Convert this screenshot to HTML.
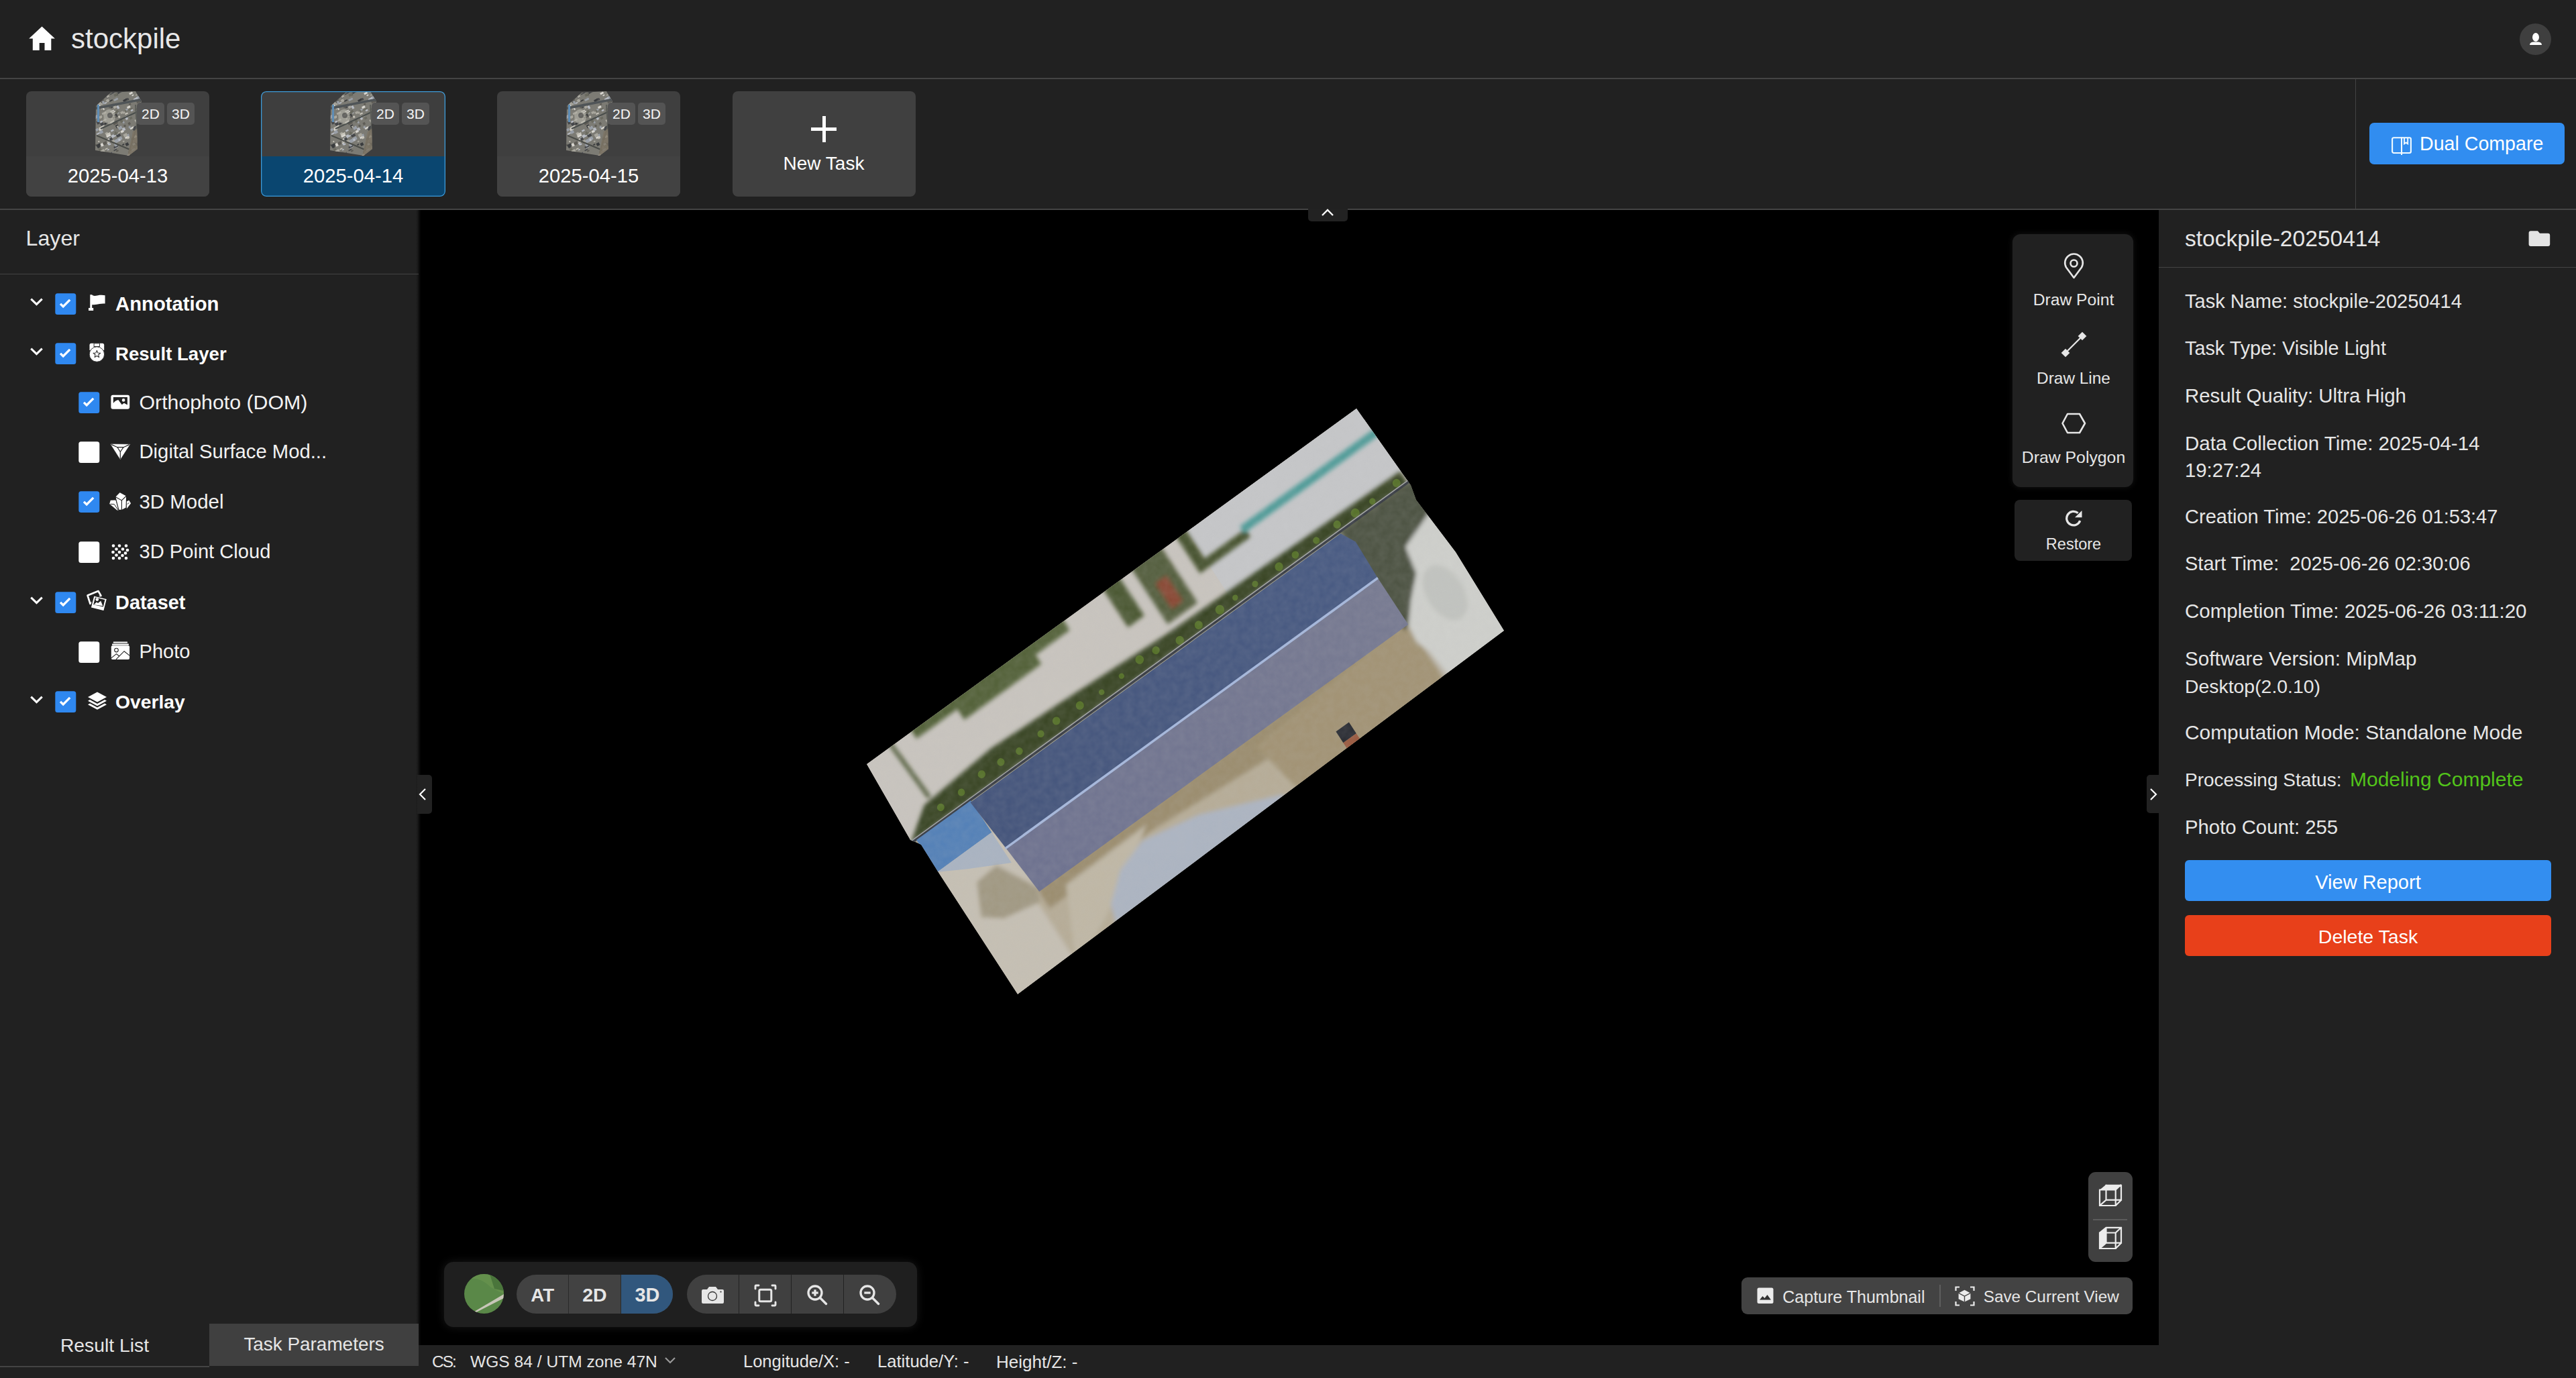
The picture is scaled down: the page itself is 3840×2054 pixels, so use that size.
<!DOCTYPE html>
<html><head><meta charset="utf-8"><style>
html,body{margin:0;padding:0;width:3840px;height:2054px;overflow:hidden;background:#000;}
body{position:relative;font-family:"Liberation Sans",sans-serif;}
.t{position:absolute;line-height:1;white-space:nowrap;}
.r{position:absolute;}
svg.r{overflow:visible}
</style></head><body>
<div class="r" style="left:0px;top:0px;width:3840px;height:116px;background:#212121;"></div>
<div class="r" style="left:0px;top:116px;width:3840px;height:1.5px;background:#444444;"></div>
<div class="r" style="left:0px;top:118px;width:3840px;height:193px;background:#212121;"></div>
<div class="r" style="left:3510.5px;top:117px;width:1.300000000000182px;height:194px;background:#444444;"></div>
<div class="r" style="left:0px;top:311px;width:3840px;height:1.5px;background:#444444;"></div>
<div class="r" style="left:0px;top:313px;width:624px;height:1741px;background:#212121;"></div>
<div class="r" style="left:3218px;top:313px;width:622px;height:1741px;background:#212121;"></div>
<div class="r" style="left:624px;top:313px;width:2594px;height:1692px;background:#000;"></div>
<div class="r" style="left:620px;top:313px;width:8px;height:1692px;background:linear-gradient(90deg,#212121 0%,#1a1a1a 30%,#060606 75%,#000 100%);"></div>
<div class="r" style="left:624px;top:2005px;width:2594px;height:49px;background:#212121;"></div>
<svg class="r" style="left:40px;top:36px;" width="46" height="42" viewBox="0 0 46 42"><path d="M22.5 3.6 L3.2 21.5 H8.8 V39.1 H18.7 V27.9 H26.5 V39.1 H36.3 V21.5 H41.9 Z" fill="#fff"/></svg>
<div class="t" style="left:106.0px;top:37.4px;font-size:42px;color:#e8e8e8;font-weight:400;">stockpile</div>
<div class="r" style="left:3756px;top:35px;width:47px;height:47px;border-radius:50%;background:#3f3f3f"></div>
<svg class="r" style="left:3768px;top:46px;" width="24" height="24" viewBox="0 0 24 24"><ellipse cx="12" cy="9.5" rx="5" ry="6.5" fill="#fff"/><path d="M3 21 Q3 17 8 16.5 L16 16.5 Q21 17 21 21 Z" fill="#fff"/></svg>
<svg width="0" height="0" style="position:absolute"><defs><symbol id="thumb" viewBox="0 0 72 97"><defs><clipPath id="thc"><polygon points="3,22 25,2 62,0 71,15 64,50 65,86 52,96 2,88"/></clipPath></defs><g clip-path="url(#thc)"><rect width="72" height="97" fill="#7c7b74"/><rect x="22.7" y="14.5" width="5.3" height="1.8" fill="#3a3c3e" transform="rotate(-28 22.7 14.5)"/><rect x="6.6" y="55.9" width="6.5" height="2.3" fill="#a9a79e" transform="rotate(-28 6.6 55.9)"/><rect x="30.4" y="6.7" width="2.5" height="3.0" fill="#a9a79e" transform="rotate(-28 30.4 6.7)"/><rect x="66.3" y="60.5" width="4.9" height="1.7" fill="#6a6a60" transform="rotate(-28 66.3 60.5)"/><rect x="3.5" y="21.2" width="4.8" height="2.0" fill="#6a6a60" transform="rotate(-28 3.5 21.2)"/><rect x="10.1" y="11.3" width="3.5" height="4.4" fill="#5e5c56" transform="rotate(-28 10.1 11.3)"/><rect x="7.2" y="54.8" width="2.9" height="1.8" fill="#a9a79e" transform="rotate(-28 7.2 54.8)"/><rect x="39.5" y="59.4" width="4.5" height="3.4" fill="#d8d6d0" transform="rotate(-28 39.5 59.4)"/><rect x="32.6" y="88.7" width="3.8" height="2.4" fill="#5e5c56" transform="rotate(-28 32.6 88.7)"/><rect x="48.9" y="23.4" width="4.9" height="3.3" fill="#d8d6d0" transform="rotate(-28 48.9 23.4)"/><rect x="51.1" y="27.6" width="6.9" height="1.9" fill="#6a6a60" transform="rotate(-28 51.1 27.6)"/><rect x="11.5" y="32.8" width="6.7" height="3.0" fill="#a9a79e" transform="rotate(-28 11.5 32.8)"/><rect x="53.5" y="55.0" width="6.4" height="2.6" fill="#d8d6d0" transform="rotate(-28 53.5 55.0)"/><rect x="41.6" y="55.7" width="4.3" height="4.4" fill="#b8bcc4" transform="rotate(-28 41.6 55.7)"/><rect x="33.2" y="63.8" width="2.3" height="4.0" fill="#9aa0a8" transform="rotate(-28 33.2 63.8)"/><rect x="19.9" y="37.0" width="5.3" height="1.6" fill="#9aa0a8" transform="rotate(-28 19.9 37.0)"/><rect x="24.9" y="58.6" width="4.5" height="2.3" fill="#b8bcc4" transform="rotate(-28 24.9 58.6)"/><rect x="9.1" y="23.8" width="4.0" height="4.5" fill="#a9a79e" transform="rotate(-28 9.1 23.8)"/><rect x="11.6" y="38.6" width="3.4" height="2.0" fill="#6a6a60" transform="rotate(-28 11.6 38.6)"/><rect x="60.5" y="26.7" width="4.1" height="2.8" fill="#6a6a60" transform="rotate(-28 60.5 26.7)"/><rect x="67.0" y="14.5" width="2.9" height="2.3" fill="#45474a" transform="rotate(-28 67.0 14.5)"/><rect x="0.8" y="79.8" width="2.9" height="2.5" fill="#5e5c56" transform="rotate(-28 0.8 79.8)"/><rect x="29.3" y="35.4" width="4.8" height="4.8" fill="#3a3c3e" transform="rotate(-28 29.3 35.4)"/><rect x="66.5" y="62.9" width="5.7" height="3.1" fill="#3a3c3e" transform="rotate(-28 66.5 62.9)"/><rect x="27.5" y="38.3" width="2.5" height="3.7" fill="#c9c6bc" transform="rotate(-28 27.5 38.3)"/><rect x="13.3" y="94.5" width="4.2" height="1.9" fill="#c9c6bc" transform="rotate(-28 13.3 94.5)"/><rect x="7.2" y="54.4" width="4.7" height="4.8" fill="#c9c6bc" transform="rotate(-28 7.2 54.4)"/><rect x="4.9" y="20.0" width="3.9" height="3.7" fill="#d8d6d0" transform="rotate(-28 4.9 20.0)"/><rect x="42.2" y="45.5" width="2.6" height="3.2" fill="#9aa0a8" transform="rotate(-28 42.2 45.5)"/><rect x="33.6" y="29.9" width="2.7" height="4.1" fill="#b8bcc4" transform="rotate(-28 33.6 29.9)"/><rect x="33.5" y="66.4" width="4.6" height="2.2" fill="#3a3c3e" transform="rotate(-28 33.5 66.4)"/><rect x="25.3" y="66.2" width="6.6" height="4.2" fill="#b8bcc4" transform="rotate(-28 25.3 66.2)"/><rect x="68.5" y="82.9" width="5.5" height="2.4" fill="#d8d6d0" transform="rotate(-28 68.5 82.9)"/><rect x="63.6" y="34.1" width="3.1" height="3.4" fill="#3a3c3e" transform="rotate(-28 63.6 34.1)"/><rect x="23.1" y="21.4" width="6.1" height="4.9" fill="#45474a" transform="rotate(-28 23.1 21.4)"/><rect x="56.4" y="78.6" width="5.7" height="2.3" fill="#3a3c3e" transform="rotate(-28 56.4 78.6)"/><rect x="34.5" y="70.2" width="6.9" height="4.3" fill="#9aa0a8" transform="rotate(-28 34.5 70.2)"/><rect x="18.1" y="66.5" width="6.8" height="3.1" fill="#d8d6d0" transform="rotate(-28 18.1 66.5)"/><rect x="66.9" y="35.0" width="3.1" height="2.3" fill="#45474a" transform="rotate(-28 66.9 35.0)"/><rect x="23.6" y="46.3" width="6.9" height="3.6" fill="#c9c6bc" transform="rotate(-28 23.6 46.3)"/><rect x="33.6" y="62.7" width="6.0" height="1.8" fill="#a9a79e" transform="rotate(-28 33.6 62.7)"/><rect x="63.7" y="75.1" width="5.8" height="3.2" fill="#5e5c56" transform="rotate(-28 63.7 75.1)"/><rect x="30.4" y="61.0" width="2.4" height="4.8" fill="#6a6a60" transform="rotate(-28 30.4 61.0)"/><rect x="32.4" y="71.4" width="2.4" height="2.1" fill="#5e5c56" transform="rotate(-28 32.4 71.4)"/><rect x="1.9" y="56.7" width="4.3" height="3.8" fill="#9aa0a8" transform="rotate(-28 1.9 56.7)"/><rect x="46.0" y="33.6" width="4.7" height="2.0" fill="#c9c6bc" transform="rotate(-28 46.0 33.6)"/><rect x="56.0" y="69.7" width="2.5" height="4.1" fill="#5e5c56" transform="rotate(-28 56.0 69.7)"/><rect x="30.4" y="83.7" width="6.1" height="2.2" fill="#b8bcc4" transform="rotate(-28 30.4 83.7)"/><rect x="14.9" y="48.1" width="5.8" height="2.6" fill="#3a3c3e" transform="rotate(-28 14.9 48.1)"/><rect x="29.3" y="12.6" width="6.6" height="2.7" fill="#9aa0a8" transform="rotate(-28 29.3 12.6)"/><rect x="46.4" y="78.2" width="4.6" height="4.4" fill="#3a3c3e" transform="rotate(-28 46.4 78.2)"/><rect x="9.2" y="14.6" width="4.6" height="4.6" fill="#5e5c56" transform="rotate(-28 9.2 14.6)"/><rect x="42.6" y="74.5" width="2.7" height="2.0" fill="#a9a79e" transform="rotate(-28 42.6 74.5)"/><rect x="39.0" y="31.3" width="4.6" height="3.4" fill="#a9a79e" transform="rotate(-28 39.0 31.3)"/><rect x="61.8" y="5.5" width="3.0" height="1.6" fill="#a9a79e" transform="rotate(-28 61.8 5.5)"/><rect x="35.5" y="53.9" width="5.8" height="4.7" fill="#9aa0a8" transform="rotate(-28 35.5 53.9)"/><rect x="22.8" y="93.4" width="5.0" height="2.2" fill="#b8bcc4" transform="rotate(-28 22.8 93.4)"/><rect x="31.7" y="51.2" width="4.4" height="4.8" fill="#3a3c3e" transform="rotate(-28 31.7 51.2)"/><rect x="61.4" y="90.4" width="3.3" height="3.5" fill="#45474a" transform="rotate(-28 61.4 90.4)"/><rect x="58.8" y="13.2" width="2.6" height="3.0" fill="#a9a79e" transform="rotate(-28 58.8 13.2)"/><rect x="47.0" y="41.1" width="3.1" height="2.6" fill="#a9a79e" transform="rotate(-28 47.0 41.1)"/><rect x="62.8" y="14.8" width="5.6" height="3.8" fill="#5e5c56" transform="rotate(-28 62.8 14.8)"/><rect x="17.7" y="13.2" width="4.3" height="4.1" fill="#a9a79e" transform="rotate(-28 17.7 13.2)"/><rect x="27.9" y="46.8" width="6.9" height="4.4" fill="#5e5c56" transform="rotate(-28 27.9 46.8)"/><rect x="49.4" y="95.4" width="4.0" height="3.0" fill="#d8d6d0" transform="rotate(-28 49.4 95.4)"/><rect x="22.3" y="69.3" width="2.1" height="3.4" fill="#9aa0a8" transform="rotate(-28 22.3 69.3)"/><rect x="49.2" y="36.9" width="4.6" height="2.5" fill="#a9a79e" transform="rotate(-28 49.2 36.9)"/><rect x="7.9" y="88.2" width="3.1" height="4.6" fill="#a9a79e" transform="rotate(-28 7.9 88.2)"/><rect x="18.6" y="3.8" width="5.9" height="2.4" fill="#5e5c56" transform="rotate(-28 18.6 3.8)"/><rect x="57.4" y="81.6" width="5.4" height="4.8" fill="#6a6a60" transform="rotate(-28 57.4 81.6)"/><rect x="10.5" y="88.2" width="4.9" height="4.0" fill="#a9a79e" transform="rotate(-28 10.5 88.2)"/><rect x="19.5" y="76.8" width="2.9" height="4.6" fill="#b8bcc4" transform="rotate(-28 19.5 76.8)"/><rect x="65.7" y="60.9" width="6.0" height="1.8" fill="#45474a" transform="rotate(-28 65.7 60.9)"/><rect x="4.7" y="82.8" width="4.3" height="2.7" fill="#3a3c3e" transform="rotate(-28 4.7 82.8)"/><rect x="29.2" y="87.9" width="5.1" height="1.7" fill="#45474a" transform="rotate(-28 29.2 87.9)"/><rect x="65.7" y="93.0" width="3.3" height="2.1" fill="#b8bcc4" transform="rotate(-28 65.7 93.0)"/><rect x="44.0" y="51.0" width="3.0" height="3.1" fill="#5e5c56" transform="rotate(-28 44.0 51.0)"/><rect x="18.9" y="77.2" width="7.0" height="1.6" fill="#c9c6bc" transform="rotate(-28 18.9 77.2)"/><rect x="51.3" y="52.9" width="2.9" height="3.2" fill="#9aa0a8" transform="rotate(-28 51.3 52.9)"/><rect x="7.4" y="78.6" width="4.2" height="3.2" fill="#6a6a60" transform="rotate(-28 7.4 78.6)"/><rect x="67.9" y="29.5" width="3.1" height="2.3" fill="#45474a" transform="rotate(-28 67.9 29.5)"/><rect x="58.3" y="67.8" width="5.2" height="2.9" fill="#d8d6d0" transform="rotate(-28 58.3 67.8)"/><rect x="68.7" y="80.4" width="2.1" height="3.7" fill="#b8bcc4" transform="rotate(-28 68.7 80.4)"/><rect x="30.2" y="5.3" width="5.3" height="2.8" fill="#3a3c3e" transform="rotate(-28 30.2 5.3)"/><rect x="46.9" y="27.1" width="3.2" height="2.5" fill="#9aa0a8" transform="rotate(-28 46.9 27.1)"/><rect x="13.0" y="25.8" width="2.0" height="2.8" fill="#d8d6d0" transform="rotate(-28 13.0 25.8)"/><rect x="68.1" y="52.5" width="3.2" height="4.9" fill="#b8bcc4" transform="rotate(-28 68.1 52.5)"/><rect x="15.3" y="17.6" width="3.7" height="1.8" fill="#b8bcc4" transform="rotate(-28 15.3 17.6)"/><rect x="35.2" y="19.3" width="4.5" height="1.5" fill="#b8bcc4" transform="rotate(-28 35.2 19.3)"/><rect x="57.2" y="13.8" width="4.9" height="2.9" fill="#b8bcc4" transform="rotate(-28 57.2 13.8)"/><rect x="21.3" y="22.3" width="4.9" height="3.4" fill="#5e5c56" transform="rotate(-28 21.3 22.3)"/><rect x="46.0" y="68.7" width="6.4" height="2.9" fill="#d8d6d0" transform="rotate(-28 46.0 68.7)"/><rect x="50.4" y="47.4" width="3.4" height="3.7" fill="#5e5c56" transform="rotate(-28 50.4 47.4)"/><rect x="3.1" y="80.2" width="6.5" height="3.7" fill="#3a3c3e" transform="rotate(-28 3.1 80.2)"/><rect x="9.8" y="50.3" width="4.5" height="4.4" fill="#c9c6bc" transform="rotate(-28 9.8 50.3)"/><rect x="57.8" y="56.1" width="6.5" height="3.9" fill="#45474a" transform="rotate(-28 57.8 56.1)"/><rect x="6.0" y="4.0" width="5.2" height="4.9" fill="#6a6a60" transform="rotate(-28 6.0 4.0)"/><rect x="58.5" y="53.6" width="5.1" height="3.7" fill="#45474a" transform="rotate(-28 58.5 53.6)"/><rect x="34.3" y="0.3" width="6.0" height="4.1" fill="#3a3c3e" transform="rotate(-28 34.3 0.3)"/><rect x="62.9" y="8.8" width="4.6" height="4.1" fill="#9aa0a8" transform="rotate(-28 62.9 8.8)"/><rect x="17.7" y="7.1" width="3.3" height="4.1" fill="#45474a" transform="rotate(-28 17.7 7.1)"/><rect x="16.2" y="62.4" width="4.3" height="4.5" fill="#a9a79e" transform="rotate(-28 16.2 62.4)"/><rect x="33.5" y="65.6" width="5.8" height="3.7" fill="#45474a" transform="rotate(-28 33.5 65.6)"/><rect x="5.4" y="14.2" width="3.3" height="4.1" fill="#b8bcc4" transform="rotate(-28 5.4 14.2)"/><rect x="43.5" y="12.8" width="4.4" height="3.2" fill="#a9a79e" transform="rotate(-28 43.5 12.8)"/><rect x="48.5" y="64.9" width="3.5" height="3.3" fill="#9aa0a8" transform="rotate(-28 48.5 64.9)"/><rect x="32.6" y="73.6" width="7.0" height="3.4" fill="#b8bcc4" transform="rotate(-28 32.6 73.6)"/><rect x="68.5" y="89.9" width="2.1" height="3.1" fill="#3a3c3e" transform="rotate(-28 68.5 89.9)"/><rect x="67.8" y="43.1" width="3.3" height="2.2" fill="#45474a" transform="rotate(-28 67.8 43.1)"/><rect x="5.2" y="8.7" width="5.7" height="2.4" fill="#d8d6d0" transform="rotate(-28 5.2 8.7)"/><rect x="9.3" y="78.7" width="4.5" height="4.6" fill="#d8d6d0" transform="rotate(-28 9.3 78.7)"/><rect x="16.2" y="86.2" width="4.4" height="1.6" fill="#c9c6bc" transform="rotate(-28 16.2 86.2)"/><rect x="66.5" y="65.4" width="4.0" height="4.0" fill="#6a6a60" transform="rotate(-28 66.5 65.4)"/><rect x="24.1" y="30.3" width="6.2" height="1.5" fill="#d8d6d0" transform="rotate(-28 24.1 30.3)"/><rect x="58.7" y="11.5" width="6.6" height="4.0" fill="#b8bcc4" transform="rotate(-28 58.7 11.5)"/><rect x="17.7" y="6.2" width="4.0" height="4.5" fill="#a9a79e" transform="rotate(-28 17.7 6.2)"/><rect x="25.2" y="41.1" width="3.4" height="1.7" fill="#a9a79e" transform="rotate(-28 25.2 41.1)"/><rect x="3.6" y="63.5" width="5.2" height="2.0" fill="#b8bcc4" transform="rotate(-28 3.6 63.5)"/><rect x="30.5" y="30.3" width="5.9" height="4.2" fill="#6a6a60" transform="rotate(-28 30.5 30.3)"/><rect x="61.9" y="77.9" width="5.2" height="4.7" fill="#3a3c3e" transform="rotate(-28 61.9 77.9)"/><rect x="38.4" y="69.1" width="2.2" height="4.1" fill="#9aa0a8" transform="rotate(-28 38.4 69.1)"/><rect x="43.0" y="13.3" width="6.3" height="3.2" fill="#3a3c3e" transform="rotate(-28 43.0 13.3)"/><rect x="8.9" y="45.3" width="3.7" height="2.5" fill="#b8bcc4" transform="rotate(-28 8.9 45.3)"/><rect x="28.4" y="22.9" width="4.4" height="3.8" fill="#a9a79e" transform="rotate(-28 28.4 22.9)"/><rect x="11.7" y="15.5" width="3.0" height="4.7" fill="#9aa0a8" transform="rotate(-28 11.7 15.5)"/><rect x="38.5" y="43.5" width="3.7" height="4.2" fill="#6a6a60" transform="rotate(-28 38.5 43.5)"/><rect x="9.8" y="18.5" width="2.5" height="2.7" fill="#a9a79e" transform="rotate(-28 9.8 18.5)"/><rect x="22.4" y="35.4" width="6.0" height="2.2" fill="#c9c6bc" transform="rotate(-28 22.4 35.4)"/><rect x="52.5" y="39.6" width="4.1" height="3.3" fill="#6a6a60" transform="rotate(-28 52.5 39.6)"/><rect x="18.9" y="72.2" width="4.5" height="3.5" fill="#d8d6d0" transform="rotate(-28 18.9 72.2)"/><rect x="8.8" y="48.3" width="5.1" height="4.5" fill="#45474a" transform="rotate(-28 8.8 48.3)"/><rect x="6.5" y="86.1" width="3.9" height="3.8" fill="#6a6a60" transform="rotate(-28 6.5 86.1)"/><rect x="66.8" y="81.5" width="6.4" height="1.6" fill="#c9c6bc" transform="rotate(-28 66.8 81.5)"/><rect x="29.8" y="73.3" width="6.0" height="4.9" fill="#9aa0a8" transform="rotate(-28 29.8 73.3)"/><rect x="0.0" y="37.6" width="6.6" height="4.4" fill="#9aa0a8" transform="rotate(-28 0.0 37.6)"/><rect x="68.1" y="23.9" width="2.5" height="2.0" fill="#3a3c3e" transform="rotate(-28 68.1 23.9)"/><rect x="68.0" y="10.5" width="6.1" height="4.0" fill="#9aa0a8" transform="rotate(-28 68.0 10.5)"/><rect x="6.0" y="74.6" width="2.0" height="1.9" fill="#c9c6bc" transform="rotate(-28 6.0 74.6)"/><rect x="45.2" y="29.2" width="2.6" height="2.4" fill="#6a6a60" transform="rotate(-28 45.2 29.2)"/><rect x="48.9" y="10.8" width="2.4" height="3.3" fill="#45474a" transform="rotate(-28 48.9 10.8)"/><rect x="27.2" y="21.5" width="5.0" height="1.5" fill="#b8bcc4" transform="rotate(-28 27.2 21.5)"/><rect x="69.7" y="26.7" width="3.6" height="4.4" fill="#45474a" transform="rotate(-28 69.7 26.7)"/><rect x="33.3" y="22.5" width="3.2" height="4.9" fill="#b8bcc4" transform="rotate(-28 33.3 22.5)"/><rect x="3.9" y="18.6" width="6.4" height="3.8" fill="#a9a79e" transform="rotate(-28 3.9 18.6)"/><rect x="18.0" y="64.1" width="6.6" height="2.3" fill="#c9c6bc" transform="rotate(-28 18.0 64.1)"/><rect x="48.7" y="69.0" width="3.8" height="2.9" fill="#c9c6bc" transform="rotate(-28 48.7 69.0)"/><rect x="55.8" y="71.0" width="4.5" height="2.2" fill="#45474a" transform="rotate(-28 55.8 71.0)"/><rect x="21.8" y="78.7" width="3.2" height="2.3" fill="#b8bcc4" transform="rotate(-28 21.8 78.7)"/><rect x="7.6" y="59.9" width="5.1" height="4.6" fill="#9aa0a8" transform="rotate(-28 7.6 59.9)"/><rect x="29.2" y="63.9" width="6.7" height="2.0" fill="#6a6a60" transform="rotate(-28 29.2 63.9)"/><rect x="3.8" y="2.3" width="5.0" height="3.0" fill="#c9c6bc" transform="rotate(-28 3.8 2.3)"/><rect x="12.9" y="43.2" width="5.6" height="2.6" fill="#a9a79e" transform="rotate(-28 12.9 43.2)"/><rect x="69.8" y="89.4" width="3.6" height="2.1" fill="#3a3c3e" transform="rotate(-28 69.8 89.4)"/><rect x="52.2" y="3.1" width="5.3" height="2.8" fill="#d8d6d0" transform="rotate(-28 52.2 3.1)"/><rect x="68.9" y="42.5" width="2.5" height="1.8" fill="#a9a79e" transform="rotate(-28 68.9 42.5)"/><rect x="24.6" y="91.7" width="2.6" height="4.9" fill="#45474a" transform="rotate(-28 24.6 91.7)"/><rect x="26.6" y="73.8" width="3.5" height="4.3" fill="#a9a79e" transform="rotate(-28 26.6 73.8)"/><rect x="3.4" y="45.5" width="3.9" height="4.7" fill="#45474a" transform="rotate(-28 3.4 45.5)"/><rect x="22.6" y="70.8" width="4.4" height="3.7" fill="#45474a" transform="rotate(-28 22.6 70.8)"/><rect x="56.8" y="73.6" width="2.2" height="1.6" fill="#a9a79e" transform="rotate(-28 56.8 73.6)"/><rect x="56.2" y="6.0" width="3.0" height="1.7" fill="#d8d6d0" transform="rotate(-28 56.2 6.0)"/><rect x="25.4" y="32.2" width="6.8" height="1.7" fill="#d8d6d0" transform="rotate(-28 25.4 32.2)"/><rect x="64.7" y="28.6" width="5.6" height="3.6" fill="#a9a79e" transform="rotate(-28 64.7 28.6)"/><rect x="1.7" y="22.5" width="4.4" height="4.8" fill="#6a6a60" transform="rotate(-28 1.7 22.5)"/><rect x="55.3" y="87.7" width="6.1" height="2.0" fill="#9aa0a8" transform="rotate(-28 55.3 87.7)"/><rect x="12.8" y="77.0" width="5.7" height="4.4" fill="#5e5c56" transform="rotate(-28 12.8 77.0)"/><rect x="42.5" y="31.5" width="3.6" height="2.8" fill="#a9a79e" transform="rotate(-28 42.5 31.5)"/><rect x="35.8" y="37.6" width="2.8" height="2.9" fill="#c9c6bc" transform="rotate(-28 35.8 37.6)"/><rect x="33.7" y="52.3" width="2.8" height="3.0" fill="#a9a79e" transform="rotate(-28 33.7 52.3)"/><rect x="69.1" y="25.4" width="2.4" height="1.8" fill="#9aa0a8" transform="rotate(-28 69.1 25.4)"/><rect x="69.2" y="93.3" width="2.9" height="2.0" fill="#9aa0a8" transform="rotate(-28 69.2 93.3)"/><rect x="43.4" y="64.7" width="5.7" height="4.5" fill="#a9a79e" transform="rotate(-28 43.4 64.7)"/><rect x="54.6" y="28.2" width="3.4" height="2.4" fill="#b8bcc4" transform="rotate(-28 54.6 28.2)"/><rect x="51.7" y="19.1" width="3.2" height="2.4" fill="#5e5c56" transform="rotate(-28 51.7 19.1)"/><rect x="19.7" y="87.1" width="2.9" height="1.7" fill="#b8bcc4" transform="rotate(-28 19.7 87.1)"/><rect x="69.5" y="48.7" width="3.2" height="4.3" fill="#9aa0a8" transform="rotate(-28 69.5 48.7)"/><rect x="69.4" y="9.8" width="4.4" height="4.4" fill="#9aa0a8" transform="rotate(-28 69.4 9.8)"/><rect x="64.0" y="3.9" width="3.5" height="1.9" fill="#45474a" transform="rotate(-28 64.0 3.9)"/><rect x="42.0" y="79.5" width="3.0" height="1.8" fill="#3a3c3e" transform="rotate(-28 42.0 79.5)"/><rect x="60.6" y="43.1" width="3.3" height="4.2" fill="#c9c6bc" transform="rotate(-28 60.6 43.1)"/><rect x="7.4" y="57.2" width="5.1" height="2.3" fill="#d8d6d0" transform="rotate(-28 7.4 57.2)"/><rect x="23.8" y="4.2" width="7.0" height="1.6" fill="#45474a" transform="rotate(-28 23.8 4.2)"/><rect x="57.0" y="78.6" width="4.0" height="2.8" fill="#b8bcc4" transform="rotate(-28 57.0 78.6)"/><rect x="5.5" y="3.0" width="4.5" height="3.2" fill="#6a6a60" transform="rotate(-28 5.5 3.0)"/><rect x="7.1" y="37.9" width="4.8" height="3.7" fill="#a9a79e" transform="rotate(-28 7.1 37.9)"/><rect x="45.7" y="38.2" width="3.4" height="5.0" fill="#b8bcc4" transform="rotate(-28 45.7 38.2)"/><rect x="29.2" y="4.9" width="5.7" height="4.6" fill="#6a6a60" transform="rotate(-28 29.2 4.9)"/><rect x="29.2" y="83.0" width="7.0" height="2.8" fill="#45474a" transform="rotate(-28 29.2 83.0)"/><rect x="27.4" y="38.9" width="6.7" height="3.0" fill="#5e5c56" transform="rotate(-28 27.4 38.9)"/><rect x="29.7" y="78.8" width="4.0" height="4.6" fill="#9aa0a8" transform="rotate(-28 29.7 78.8)"/><path d="M0 26 L72 12" stroke="#4f5457" stroke-width="3.5"/><path d="M10 56 L66 30" stroke="#4a4e4c" stroke-width="2"/><path d="M4 66 L56 88" stroke="#4a4c48" stroke-width="2"/><path d="M62 20 L64 52 L52 92" stroke="#5a5c58" stroke-width="2" fill="none"/><ellipse cx="23" cy="38" rx="9" ry="11" fill="#b8b5ac" opacity="0.6"/><ellipse cx="24" cy="36" rx="4" ry="4" fill="#4a4a48" opacity="0.7"/><rect x="5" y="20" width="3" height="26" fill="#5f8db5"/><polygon points="58,60 72,50 72,97 50,97" fill="#7d7464" opacity="0.8"/></g></symbol></defs></svg>
<div class="r" style="left:39px;top:136px;width:273px;height:157px;border-radius:8px;background:#3f3f3f;overflow:hidden"><div class="r" style="left:0;top:97px;width:100%;height:60px;background:#424242"></div></div>
<svg class="r" style="left:140px;top:136px;" width="72" height="97" viewBox="0 0 72 97"><use href="#thumb"/></svg>
<div class="r" style="left:204px;top:153px;width:41px;height:33px;border-radius:5px;background:#545454"></div>
<div class="t" style="left:204.0px;width:41px;text-align:center;top:159.0px;font-size:21px;color:#f4f4f4;font-weight:400;">2D</div>
<div class="r" style="left:249px;top:153px;width:41px;height:33px;border-radius:5px;background:#545454"></div>
<div class="t" style="left:249.0px;width:41px;text-align:center;top:159.0px;font-size:21px;color:#f4f4f4;font-weight:400;">3D</div>
<div class="t" style="left:45.5px;width:260px;text-align:center;top:247.9px;font-size:29.2px;color:#fff;font-weight:400;">2025-04-13</div>
<div class="r" style="left:389px;top:136px;width:275px;height:157px;border-radius:8px;background:#3e3e3e;overflow:hidden"><div class="r" style="left:0;top:97px;width:100%;height:60px;background:#0a4670"></div><div class="r" style="left:0;top:0;width:100%;height:100%;border-radius:8px;box-shadow:inset 0 0 0 1.3px #3d9bd9;z-index:3"></div></div>
<svg class="r" style="left:490px;top:136px;" width="72" height="97" viewBox="0 0 72 97"><use href="#thumb"/></svg>
<div class="r" style="left:554px;top:153px;width:41px;height:33px;border-radius:5px;background:#545454"></div>
<div class="t" style="left:554.0px;width:41px;text-align:center;top:159.0px;font-size:21px;color:#f4f4f4;font-weight:400;">2D</div>
<div class="r" style="left:599px;top:153px;width:41px;height:33px;border-radius:5px;background:#545454"></div>
<div class="t" style="left:599.0px;width:41px;text-align:center;top:159.0px;font-size:21px;color:#f4f4f4;font-weight:400;">3D</div>
<div class="t" style="left:396.5px;width:260px;text-align:center;top:247.9px;font-size:29.2px;color:#fff;font-weight:400;">2025-04-14</div>
<div class="r" style="left:741px;top:136px;width:273px;height:157px;border-radius:8px;background:#3f3f3f;overflow:hidden"><div class="r" style="left:0;top:97px;width:100%;height:60px;background:#424242"></div></div>
<svg class="r" style="left:842px;top:136px;" width="72" height="97" viewBox="0 0 72 97"><use href="#thumb"/></svg>
<div class="r" style="left:906px;top:153px;width:41px;height:33px;border-radius:5px;background:#545454"></div>
<div class="t" style="left:906.0px;width:41px;text-align:center;top:159.0px;font-size:21px;color:#f4f4f4;font-weight:400;">2D</div>
<div class="r" style="left:951px;top:153px;width:41px;height:33px;border-radius:5px;background:#545454"></div>
<div class="t" style="left:951.0px;width:41px;text-align:center;top:159.0px;font-size:21px;color:#f4f4f4;font-weight:400;">3D</div>
<div class="t" style="left:747.5px;width:260px;text-align:center;top:247.9px;font-size:29.2px;color:#fff;font-weight:400;">2025-04-15</div>
<div class="r" style="left:1092px;top:136px;width:273px;height:157px;border-radius:8px;background:#404040"></div>
<div class="r" style="left:1209px;top:190px;width:38px;height:5px;background:#fff;"></div>
<div class="r" style="left:1225.5px;top:173px;width:5.0px;height:38.5px;background:#fff;"></div>
<div class="t" style="left:1098.0px;width:260px;text-align:center;top:229.8px;font-size:28px;color:#fff;font-weight:400;">New Task</div>
<div class="r" style="left:3532px;top:183px;width:291px;height:62px;border-radius:7px;background:#318df0"></div>
<svg class="r" style="left:3563px;top:202px;" width="34" height="32" viewBox="0 0 34 32"><rect x="3.1" y="3.2" width="27.8" height="22.8" rx="2.2" fill="none" stroke="#f2fbff" stroke-width="2.1"/><path d="M17 2.5 V29" stroke="#f2fbff" stroke-width="2.1"/><path d="M21 3.4 V12.4 L23.6 10.4 L26.2 12.4 V3.4" fill="none" stroke="#f2fbff" stroke-width="1.9"/></svg>
<div class="t" style="left:3607.0px;top:200.4px;font-size:28.6px;color:#fff;font-weight:400;">Dual Compare</div>
<div class="t" style="left:38.5px;top:338.7px;font-size:32.2px;color:#e6e6e6;font-weight:400;">Layer</div>
<div class="r" style="left:0px;top:407.5px;width:624px;height:1.5px;background:#444444;"></div>
<svg class="r" style="left:44px;top:444px;" width="21" height="13" viewBox="0 0 21 13"><path d="M2.3 1.6 L10.5 9.6 L18.7 1.6" fill="none" stroke="#fff" stroke-width="3.1" stroke-linecap="butt"/></svg>
<svg class="r" style="left:82px;top:437px;" width="32" height="32" viewBox="0 0 32 32"><rect x="0.3" y="0.3" width="31" height="31.6" rx="3.5" fill="#2f88f0"/><path d="M8 15.8 L12.2 20 L22.2 9.8" fill="none" stroke="#fff" stroke-width="3.3" stroke-linecap="butt" stroke-linejoin="miter"/></svg>
<svg class="r" style="left:130px;top:437px;" width="32" height="32" viewBox="0 0 32 32"><path d="M4.3 2.3 H7 Q8.5 4.2 11.5 4 Q15 3.7 18.5 2.8 Q23 2.4 26.6 3.2 V15.6 Q22.5 15.2 18.5 16.1 Q14 17.3 9.5 17.2 L7.2 17.3 V22 H9.2 V26.1 H2 V22 H4.3 Z" fill="#fff"/></svg>
<div class="t" style="left:172.0px;top:438.2px;font-size:29.28px;color:#fff;font-weight:700;">Annotation</div>
<svg class="r" style="left:44px;top:518px;" width="21" height="13" viewBox="0 0 21 13"><path d="M2.3 1.6 L10.5 9.6 L18.7 1.6" fill="none" stroke="#fff" stroke-width="3.1" stroke-linecap="butt"/></svg>
<svg class="r" style="left:82px;top:511px;" width="32" height="32" viewBox="0 0 32 32"><rect x="0.3" y="0.3" width="31" height="31.6" rx="3.5" fill="#2f88f0"/><path d="M8 15.8 L12.2 20 L22.2 9.8" fill="none" stroke="#fff" stroke-width="3.3" stroke-linecap="butt" stroke-linejoin="miter"/></svg>
<svg class="r" style="left:130px;top:511px;" width="32" height="32" viewBox="0 0 32 32"><path d="M3.5 3.3 Q3.5 0.8 6 0.8 H22.7 Q25.2 0.8 25.2 3.3 V11 H3.5 Z" fill="#fff"/><rect x="10.1" y="0.8" width="8.4" height="4.7" fill="none" stroke="#3a3a3a" stroke-width="1"/><circle cx="14.4" cy="17.1" r="11.2" fill="#fff" stroke="#2a2a2a" stroke-width="0.9"/><polygon points="14.40,11.40 15.87,14.98 19.73,15.27 16.78,17.77 17.69,21.53 14.40,19.50 11.11,21.53 12.02,17.77 9.07,15.27 12.93,14.98" fill="none" stroke="#333" stroke-width="1.1" stroke-linejoin="round"/></svg>
<div class="t" style="left:172.0px;top:513.6px;font-size:27.6px;color:#fff;font-weight:700;">Result Layer</div>
<svg class="r" style="left:117px;top:584.2px;" width="32" height="32" viewBox="0 0 32 32"><rect x="0.3" y="0.3" width="31" height="31.6" rx="3.5" fill="#2f88f0"/><path d="M8 15.8 L12.2 20 L22.2 9.8" fill="none" stroke="#fff" stroke-width="3.3" stroke-linecap="butt" stroke-linejoin="miter"/></svg>
<svg class="r" style="left:163px;top:584.2px;" width="32" height="32" viewBox="0 0 32 32"><rect x="2.4" y="4.7" width="27.8" height="21" rx="3" fill="#fff"/><path d="M5.9 7.9 H26.9 V19.6 L21.9 16.8 L18.7 19.2 L13.3 11.9 Q8.5 13 5.9 17 Z" fill="#212121"/><circle cx="21.1" cy="12.4" r="2.3" fill="#fff"/></svg>
<div class="t" style="left:207.5px;top:584.5px;font-size:30.3px;color:#f2f2f2;font-weight:400;">Orthophoto (DOM)</div>
<svg class="r" style="left:117px;top:658px;" width="32" height="32" viewBox="0 0 32 32"><rect x="0.3" y="0.3" width="31" height="31.6" rx="3.5" fill="#fff"/></svg>
<svg class="r" style="left:163px;top:658px;" width="32" height="32" viewBox="0 0 32 32"><path d="M2.1 4.1 L30.5 4.4 L16.3 26.4 Z" fill="#fff" stroke="#fff" stroke-width="0.6" stroke-linejoin="round"/><path d="M2.6 4.4 L12 8.7 H21.1 L30 4.6 M12 8.7 L16.3 15.5 L21.1 8.7 M16.3 15.5 V26" fill="none" stroke="#212121" stroke-width="1.2"/></svg>
<div class="t" style="left:207.5px;top:659.2px;font-size:29.26px;color:#f2f2f2;font-weight:400;">Digital Surface Mod...</div>
<svg class="r" style="left:117px;top:732.3px;" width="32" height="32" viewBox="0 0 32 32"><rect x="0.3" y="0.3" width="31" height="31.6" rx="3.5" fill="#2f88f0"/><path d="M8 15.8 L12.2 20 L22.2 9.8" fill="none" stroke="#fff" stroke-width="3.3" stroke-linecap="butt" stroke-linejoin="miter"/></svg>
<svg class="r" style="left:163px;top:732.3px;" width="32" height="32" viewBox="0 0 32 32"><polygon points="0.2,19.1 1.8,13.8 9.5,13.6 14.2,28.6 11.5,28.6" fill="#fff"/><path d="M1.5 19.3 L7.3 19.6 L13 28" fill="none" stroke="#212121" stroke-width="1"/><polygon points="25.2,15.8 29.2,13.8 32.1,18.3 25.9,26.2" fill="#fff"/><path d="M26.5 19.5 L29.6 17.5" stroke="#212121" stroke-width="0.9"/><polygon points="8.8,8.4 15.5,1.6 25.6,7 25.1,24.9 18.4,28.4 14,28.4" fill="#fff" stroke="#212121" stroke-width="1.1" stroke-linejoin="round"/><path d="M8.8 8.4 L18.4 13.9 L25.6 7 M18.4 13.9 V28.2" fill="none" stroke="#212121" stroke-width="1.1"/></svg>
<div class="t" style="left:207.5px;top:733.4px;font-size:29.44px;color:#f2f2f2;font-weight:400;">3D Model</div>
<svg class="r" style="left:117px;top:807px;" width="32" height="32" viewBox="0 0 32 32"><rect x="0.3" y="0.3" width="31" height="31.6" rx="3.5" fill="#fff"/></svg>
<svg class="r" style="left:163px;top:807px;" width="32" height="32" viewBox="0 0 32 32"><circle cx="6" cy="6.5" r="2.3" fill="#fff"/><circle cx="15" cy="6.5" r="2.3" fill="#fff"/><circle cx="25" cy="6.5" r="2.3" fill="#fff"/><circle cx="10.5" cy="11.5" r="2.3" fill="#fff"/><circle cx="20" cy="11.5" r="2.3" fill="#fff"/><circle cx="27" cy="13" r="2.3" fill="#fff"/><circle cx="5.5" cy="16" r="2.3" fill="#fff"/><circle cx="15" cy="16" r="2.3" fill="#fff"/><circle cx="24" cy="17.5" r="2.3" fill="#fff"/><circle cx="10.5" cy="20.5" r="2.3" fill="#fff"/><circle cx="19.5" cy="21" r="2.3" fill="#fff"/><circle cx="6" cy="25" r="2.3" fill="#fff"/><circle cx="15" cy="25" r="2.3" fill="#fff"/><circle cx="25" cy="25" r="2.3" fill="#fff"/></svg>
<div class="t" style="left:207.5px;top:808.3px;font-size:29.14px;color:#f2f2f2;font-weight:400;">3D Point Cloud</div>
<svg class="r" style="left:44px;top:889px;" width="21" height="13" viewBox="0 0 21 13"><path d="M2.3 1.6 L10.5 9.6 L18.7 1.6" fill="none" stroke="#fff" stroke-width="3.1" stroke-linecap="butt"/></svg>
<svg class="r" style="left:82px;top:882px;" width="32" height="32" viewBox="0 0 32 32"><rect x="0.3" y="0.3" width="31" height="31.6" rx="3.5" fill="#2f88f0"/><path d="M8 15.8 L12.2 20 L22.2 9.8" fill="none" stroke="#fff" stroke-width="3.3" stroke-linecap="butt" stroke-linejoin="miter"/></svg>
<svg class="r" style="left:130px;top:882px;" width="32" height="32" viewBox="0 0 32 32"><polygon points="0.5,5.5 16.5,-1 20.5,6 4.5,18" fill="none" stroke="#fff" stroke-width="2.6" stroke-linejoin="round"/><polygon points="9.7,5.7 29.7,10.4 25,29 5,24" fill="#fff" stroke="#212121" stroke-width="1.5" stroke-linejoin="round"/><polygon points="12,8.6 26.4,11.9 23.9,22.4 9.2,19.2" fill="#212121"/><circle cx="14.8" cy="11.6" r="2.3" fill="#fff"/><polygon points="9.8,19.3 14,15.5 16,17 20.3,13.8 23.3,21.2" fill="#fff"/></svg>
<div class="t" style="left:172.0px;top:883.5px;font-size:28.93px;color:#fff;font-weight:700;">Dataset</div>
<svg class="r" style="left:117px;top:955.5px;" width="32" height="32" viewBox="0 0 32 32"><rect x="0.3" y="0.3" width="31" height="31.6" rx="3.5" fill="#fff"/></svg>
<svg class="r" style="left:163px;top:955.5px;" width="32" height="32" viewBox="0 0 32 32"><rect x="5.7" y="0.4" width="21.5" height="2" rx="0.8" fill="#fff"/><rect x="4" y="3.4" width="25" height="2.3" rx="0.8" fill="#fff"/><rect x="2.8" y="6.3" width="27.3" height="20.6" rx="2" fill="#fff"/><circle cx="10.5" cy="13.1" r="2.8" fill="none" stroke="#212121" stroke-width="1.1"/><path d="M2.8 24.9 L10.5 18.6 L14.4 21.8 M10 26.9 L22.1 14.7 L30.1 21.1" fill="none" stroke="#212121" stroke-width="1.1"/></svg>
<div class="t" style="left:207.5px;top:956.9px;font-size:29.08px;color:#f2f2f2;font-weight:400;">Photo</div>
<svg class="r" style="left:44px;top:1036.5px;" width="21" height="13" viewBox="0 0 21 13"><path d="M2.3 1.6 L10.5 9.6 L18.7 1.6" fill="none" stroke="#fff" stroke-width="3.1" stroke-linecap="butt"/></svg>
<svg class="r" style="left:82px;top:1029.5px;" width="32" height="32" viewBox="0 0 32 32"><rect x="0.3" y="0.3" width="31" height="31.6" rx="3.5" fill="#2f88f0"/><path d="M8 15.8 L12.2 20 L22.2 9.8" fill="none" stroke="#fff" stroke-width="3.3" stroke-linecap="butt" stroke-linejoin="miter"/></svg>
<svg class="r" style="left:130px;top:1029.5px;" width="32" height="32" viewBox="0 0 32 32"><path d="M15 1.5 L29 9 L15 16.5 L1 9 Z" fill="#fff"/><path d="M4 13 L1 14.8 L15 22.3 L29 14.8 L26 13 L15 19 Z" fill="#fff"/><path d="M4 18.5 L1 20.3 L15 27.8 L29 20.3 L26 18.5 L15 24.5 Z" fill="#fff"/></svg>
<div class="t" style="left:172.0px;top:1031.5px;font-size:28.3px;color:#fff;font-weight:700;">Overlay</div>
<div class="r" style="left:312px;top:1973px;width:312px;height:63px;background:#404040;"></div>
<div class="t" style="left:6.0px;width:300px;text-align:center;top:1990.5px;font-size:28.3px;color:#e6e6e6;font-weight:400;">Result List</div>
<div class="t" style="left:318.0px;width:300px;text-align:center;top:1990.2px;font-size:27.9px;color:#e6e6e6;font-weight:400;">Task Parameters</div>
<div class="r" style="left:0px;top:2036px;width:312px;height:2px;background:#444444;"></div>
<div class="t" style="left:3257.0px;top:338.6px;font-size:33.6px;color:#e6e6e6;font-weight:400;">stockpile-20250414</div>
<svg class="r" style="left:3768px;top:343px;" width="36" height="26" viewBox="0 0 36 26"><path d="M1.6 4.3 Q1.6 1.3 4.6 1.3 H15 L18 4.8 H30.2 Q33.2 4.8 33.2 7.8 V20.9 Q33.2 23.9 30.2 23.9 H4.6 Q1.6 23.9 1.6 20.9 Z" fill="#e3e3e3"/></svg>
<div class="r" style="left:3218px;top:397.5px;width:622px;height:1.5px;background:#444444;"></div>
<div class="t" style="left:3257.0px;top:435.0px;font-size:29.03px;color:#e6e6e6;font-weight:400;">Task Name: stockpile-20250414</div>
<div class="t" style="left:3257.0px;top:505.3px;font-size:28.81px;color:#e6e6e6;font-weight:400;">Task Type: Visible Light</div>
<div class="t" style="left:3257.0px;top:574.6px;font-size:29.4px;color:#e6e6e6;font-weight:400;">Result Quality: Ultra High</div>
<div class="t" style="left:3257.0px;top:645.6px;font-size:29.5px;color:#e6e6e6;font-weight:400;">Data Collection Time: 2025-04-14</div>
<div class="t" style="left:3257.0px;top:685.7px;font-size:29.3px;color:#e6e6e6;font-weight:400;">19:27:24</div>
<div class="t" style="left:3257.0px;top:756.1px;font-size:29.04px;color:#e6e6e6;font-weight:400;">Creation Time: 2025-06-26 01:53:47</div>
<div class="t" style="left:3257.0px;top:826.4px;font-size:29.01px;color:#e6e6e6;font-weight:400;">Start Time:&nbsp; 2025-06-26 02:30:06</div>
<div class="t" style="left:3257.0px;top:896.0px;font-size:29.5px;color:#e6e6e6;font-weight:400;">Completion Time: 2025-06-26 03:11:20</div>
<div class="t" style="left:3257.0px;top:966.9px;font-size:29.6px;color:#e6e6e6;font-weight:400;">Software Version: MipMap</div>
<div class="t" style="left:3257.0px;top:1008.6px;font-size:28.4px;color:#e6e6e6;font-weight:400;">Desktop(2.0.10)</div>
<div class="t" style="left:3257.0px;top:1076.7px;font-size:29.9px;color:#e6e6e6;font-weight:400;">Computation Mode: Standalone Mode</div>
<div class="t" style="left:3257.0px;top:1148.9px;font-size:28.0px;color:#e6e6e6;font-weight:400;">Processing Status:</div>
<div class="t" style="left:3257.0px;top:1218.2px;font-size:29.3px;color:#e6e6e6;font-weight:400;">Photo Count: 255</div>
<div class="t" style="left:3503.0px;top:1147.2px;font-size:30.0px;color:#52c41a;font-weight:400;">Modeling Complete</div>
<div class="r" style="left:3257px;top:1282px;width:546px;height:61px;border-radius:6px;background:#338ef0"></div>
<div class="t" style="left:3330.0px;width:400px;text-align:center;top:1300.9px;font-size:29px;color:#fff;font-weight:400;">View Report</div>
<div class="r" style="left:3257px;top:1364px;width:546px;height:61px;border-radius:6px;background:#e8401a"></div>
<div class="t" style="left:3330.0px;width:400px;text-align:center;top:1381.9px;font-size:28.5px;color:#fff;font-weight:400;">Delete Task</div>
<div class="t" style="left:644.0px;top:2017.8px;font-size:24.5px;color:#e6e6e6;font-weight:400;letter-spacing:-2px">CS:</div>
<div class="t" style="left:701.0px;top:2017.7px;font-size:24.6px;color:#e6e6e6;font-weight:400;">WGS 84 / UTM zone 47N</div>
<svg class="r" style="left:989px;top:2021px;" width="20" height="14" viewBox="0 0 20 14"><path d="M3 3 L10 10 L17 3" fill="none" stroke="#9a9a9a" stroke-width="2.2"/></svg>
<div class="t" style="left:1108.0px;top:2016.9px;font-size:25.5px;color:#e6e6e6;font-weight:400;">Longitude/X: -</div>
<div class="t" style="left:1308.0px;top:2016.8px;font-size:25.6px;color:#e6e6e6;font-weight:400;">Latitude/Y: -</div>
<div class="t" style="left:1485.0px;top:2016.5px;font-size:26px;color:#e6e6e6;font-weight:400;">Height/Z: -</div>
<svg class="r" style="left:1250px;top:580px;" width="1020" height="930" viewBox="1250 580 1020 930"><defs><clipPath id="ac"><polygon points="1292,1139 2022,609 2090,705 2103,723 2111,745 2170,823 2194,862 2242,940 1517,1482 1398,1299 1373,1259 1357,1252"/></clipPath><filter id="bl" x="-10%" y="-10%" width="120%" height="120%"><feGaussianBlur stdDeviation="3"/></filter><filter id="bl2" x="-10%" y="-10%" width="120%" height="120%"><feGaussianBlur stdDeviation="8"/></filter><filter id="noise" x="0" y="0" width="100%" height="100%"><feTurbulence type="fractalNoise" baseFrequency="0.09" numOctaves="2" seed="4"/><feColorMatrix type="matrix" values="0 0 0 0 0.5  0 0 0 0 0.5  0 0 0 0 0.5  1.6 0 0 0 -0.3"/></filter><linearGradient id="roofU" x1="0" y1="0" x2="1" y2="0"><stop offset="0" stop-color="#46567c"/><stop offset="1" stop-color="#4a5c84"/></linearGradient><linearGradient id="roofL" x1="0" y1="0" x2="1" y2="0"><stop offset="0" stop-color="#6f7390"/><stop offset="1" stop-color="#787b92"/></linearGradient></defs><g clip-path="url(#ac)"><polygon points="1292,1139 2022,609 2090,705 2103,723 2111,745 2170,823 2194,862 2242,940 1517,1482 1398,1299 1373,1259 1357,1252" fill="#b9b2a4"/><g transform="matrix(0.8093,-0.5876,0.5488,0.8366,1292,1139)"><rect x="-20" y="-20" width="960" height="155" fill="#c9c5bf"/><rect x="590" y="-20" width="330" height="135" fill="#c6c7c9"/><g filter="url(#bl)"><rect x="83" y="-20" width="80" height="33" fill="#55633a"/><rect x="158" y="-20" width="142" height="52" fill="#55633a"/><rect x="300" y="-20" width="63" height="36" fill="#55633a"/><polygon points="43,-5 49,-5 54,95 48,95" fill="#4d5836"/><polygon points="38,100 167,90 300,96 480,106 905,114 905,134 -10,134" fill="#3b4628"/><rect x="438" y="-20" width="30" height="84" fill="#4d5a35"/><rect x="490" y="-20" width="55" height="115" fill="#56613f"/><rect x="508" y="35" width="20" height="45" fill="#8a4a36"/><rect x="572" y="-20" width="18" height="80" fill="#4a5530"/><rect x="572" y="48" width="93" height="14" fill="#4a5530"/><rect x="660" y="40" width="260" height="12" fill="#4f9c99"/><rect x="-20" y="192" width="130" height="230" fill="#c6c0b4"/><polygon points="100,300 790,300 790,420 100,420" fill="#b7ad98"/><polygon points="110,300 790,300 790,330 500,345 300,330 110,335" fill="#9c8e70"/><polygon points="500,320 790,300 790,420 520,420" fill="#a39476"/><polygon points="150,320 300,318 200,380 120,420 100,420" fill="#c0b8a6"/><polygon points="180,412 190,383 230,350 281,334 373,352 492,400 500,412" fill="#adb5c2"/><polygon points="780,135 920,135 920,190 850,210 842,251 814,278 789,308 780,310" fill="#4f5544"/><polygon points="920,185 850,210 842,251 814,278 789,308 786,334 794,358 800,420 920,420" fill="#cfd0cc"/><ellipse cx="862" cy="300" rx="28" ry="45" fill="#c2c4c0"/></g><circle cx="57" cy="117" r="5.6" fill="#62802e" opacity="0.75"/><circle cx="95" cy="117" r="5.4" fill="#62802e" opacity="0.75"/><circle cx="135" cy="113" r="5.8" fill="#62802e" opacity="0.75"/><circle cx="169" cy="115" r="5.7" fill="#62802e" opacity="0.75"/><circle cx="201" cy="118" r="5.4" fill="#62802e" opacity="0.75"/><circle cx="242" cy="116" r="5.2" fill="#62802e" opacity="0.75"/><circle cx="272" cy="114" r="5.9" fill="#62802e" opacity="0.75"/><circle cx="314" cy="116" r="6.2" fill="#62802e" opacity="0.75"/><circle cx="352" cy="119" r="4.2" fill="#62802e" opacity="0.75"/><circle cx="390" cy="117" r="4.1" fill="#62802e" opacity="0.75"/><circle cx="426" cy="113" r="6.5" fill="#62802e" opacity="0.75"/><circle cx="454" cy="116" r="5.8" fill="#62802e" opacity="0.75"/><circle cx="492" cy="125" r="6.4" fill="#62802e" opacity="0.75"/><circle cx="528" cy="123" r="6.2" fill="#62802e" opacity="0.75"/><circle cx="567" cy="123" r="6.9" fill="#62802e" opacity="0.75"/><circle cx="596" cy="122" r="4.3" fill="#62802e" opacity="0.75"/><circle cx="632" cy="123" r="4.7" fill="#62802e" opacity="0.75"/><circle cx="676" cy="123" r="6.3" fill="#62802e" opacity="0.75"/><circle cx="706" cy="123" r="5.5" fill="#62802e" opacity="0.75"/><circle cx="744" cy="124" r="5.1" fill="#62802e" opacity="0.75"/><circle cx="783" cy="123" r="5.8" fill="#62802e" opacity="0.75"/><circle cx="815" cy="125" r="6.7" fill="#62802e" opacity="0.75"/><circle cx="846" cy="126" r="4.8" fill="#62802e" opacity="0.75"/><circle cx="891" cy="125" r="6.1" fill="#62802e" opacity="0.75"/><rect x="-10" y="131" width="920" height="5" fill="#3a3e46"/><rect x="-10" y="131" width="920" height="1.6" fill="#a4a6a4"/><rect x="0" y="135" width="100" height="57" fill="#5582b8"/><polygon points="0,192 100,192 100,246 40,215" fill="#aab4c2"/><polygon points="18,285 41,239 79,236 112,298 104,318 45,306" fill="#a29a84" filter="url(#bl)"/><polygon points="98,137 780,137 792,160 790,224 105,224" fill="url(#roofU)"/><polygon points="105,224 790,224 790,306 111,305" fill="url(#roofL)"/><rect x="104" y="221.5" width="686" height="3.5" fill="#a6b8dc"/><rect x="612" y="372" width="24" height="20" fill="#2c2e35"/><rect x="612" y="392" width="24" height="10" fill="#9a5a40"/></g><rect x="1250" y="580" width="1020" height="930" filter="url(#noise)" opacity="0.1"/></g></svg>
<div class="r" style="left:1950px;top:311px;width:59px;height:19px;background:#222;border-radius:0 0 5px 5px"></div>
<svg class="r" style="left:1968px;top:309px;" width="22" height="16" viewBox="0 0 22 16"><path d="M3 12 L11 4 L19 12" fill="none" stroke="#fff" stroke-width="2.4"/></svg>
<div class="r" style="left:622px;top:1155px;width:22px;height:58px;background:#222;border-radius:0 5px 5px 0"></div>
<svg class="r" style="left:620px;top:1172px;" width="20" height="24" viewBox="0 0 20 24"><path d="M14 4 L6 12 L14 20" fill="none" stroke="#fff" stroke-width="2.2"/></svg>
<div class="r" style="left:3200px;top:1155px;width:20px;height:57px;background:#222;border-radius:5px 0 0 5px"></div>
<svg class="r" style="left:3200px;top:1172px;" width="20" height="24" viewBox="0 0 20 24"><path d="M6 4 L14 12 L6 20" fill="none" stroke="#fff" stroke-width="2.2"/></svg>
<div class="r" style="left:3000px;top:349px;width:180px;height:377px;border-radius:12px;background:#212121;box-shadow:0 0 10px rgba(60,60,60,0.35)"></div>
<svg class="r" style="left:3074px;top:376px;" width="36" height="42" viewBox="0 0 36 42"><path d="M17.5 38 L6 22.5 A13.3 13.3 0 1 1 29 22.5 Z" fill="none" stroke="#e6e6e6" stroke-width="2.6" stroke-linejoin="round"/><circle cx="17.5" cy="16.5" r="5" fill="none" stroke="#e6e6e6" stroke-width="2.6"/></svg>
<div class="t" style="left:3006.0px;width:170px;text-align:center;top:435.1px;font-size:24.7px;color:#e6e6e6;font-weight:400;">Draw Point</div>
<svg class="r" style="left:3071px;top:493px;" width="41" height="41" viewBox="0 0 41 41"><path d="M8 33 L33 8" stroke="#e6e6e6" stroke-width="2.2"/><rect x="3.5" y="28.5" width="9" height="9" transform="rotate(45 8 33)" fill="#e6e6e6"/><rect x="28.5" y="3.5" width="9" height="9" transform="rotate(45 33 8)" fill="#e6e6e6"/></svg>
<div class="t" style="left:3006.0px;width:170px;text-align:center;top:552.3px;font-size:24.4px;color:#e6e6e6;font-weight:400;">Draw Line</div>
<svg class="r" style="left:3073px;top:614px;" width="37" height="34" viewBox="0 0 37 34"><path d="M9 3 H27 L35 17 L27 31 H9 L1.5 17 Z" fill="none" stroke="#e6e6e6" stroke-width="2.6" stroke-linejoin="round"/></svg>
<div class="t" style="left:3006.0px;width:170px;text-align:center;top:669.5px;font-size:24.8px;color:#e6e6e6;font-weight:400;">Draw Polygon</div>
<div class="r" style="left:3003px;top:745px;width:175px;height:91px;border-radius:8px;background:#212121"></div>
<svg class="r" style="left:3076px;top:756px;" width="32" height="34" viewBox="0 0 32 34"><path d="M24.7 20.1 A10.3 10.3 0 1 1 21.6 8.7" fill="none" stroke="#e6e6e6" stroke-width="3.3"/><path d="M17 15.3 L27.5 15.3 L27.5 5 Z" fill="#e6e6e6"/></svg>
<div class="t" style="left:3006.0px;width:170px;text-align:center;top:799.6px;font-size:23.5px;color:#e6e6e6;font-weight:400;">Restore</div>
<div class="r" style="left:3113px;top:1747px;width:66px;height:134px;border-radius:11px;background:#404040"></div>
<div class="r" style="left:3120px;top:1817px;width:51px;height:1.5px;background:#5c5c5c;"></div>
<svg class="r" style="left:3128px;top:1764px;" width="36" height="36" viewBox="0 0 36 36"><path d="M2 9.5 L11.5 1.8 H34 L25.7 9.5 Z" fill="#ececec"/><path d="M2 9.5 H25.7 V33 H2 Z M11.5 1.8 V24.7 H34 V1.8 M25.7 9.5 L34 1.8 M2 33 L11.5 24.7 M25.7 33 L34 24.7" fill="none" stroke="#ececec" stroke-width="2.2"/></svg>
<svg class="r" style="left:3128px;top:1828px;" width="36" height="36" viewBox="0 0 36 36"><path d="M2 9.5 L11.5 1.8 V24.7 L2 33 Z" fill="#ececec"/><path d="M2 9.5 H25.7 V33 H2 Z M11.5 1.8 V24.7 H34 V1.8 H11.5 L2 9.5 M25.7 9.5 L34 1.8 M2 33 L11.5 24.7 M25.7 33 L34 24.7" fill="none" stroke="#ececec" stroke-width="2.2"/></svg>
<div class="r" style="left:2596px;top:1904px;width:583px;height:55px;border-radius:9px;background:#434343"></div>
<svg class="r" style="left:2619px;top:1919px;" width="25" height="25" viewBox="0 0 25 25"><rect x="0.5" y="0.5" width="24" height="23.5" rx="2.5" fill="#ececec"/><path d="M4 18.5 L8.5 13 L11.5 16 L15.5 11 L21 18.5 Z" fill="#333"/></svg>
<div class="t" style="left:2657.3px;top:1920.6px;font-size:25px;color:#e6e6e6;font-weight:400;">Capture Thumbnail</div>
<div class="r" style="left:2891px;top:1915px;width:1.5px;height:33px;background:#5e5e5e;"></div>
<svg class="r" style="left:2914px;top:1917px;" width="30" height="30" viewBox="0 0 30 30"><path d="M1.5 7 V1.5 H7 M23 1.5 H28.5 V7 M28.5 23 V28.5 H23 M7 28.5 H1.5 V23" fill="none" stroke="#ececec" stroke-width="2.2"/><path d="M14.5 5.8 L23.4 10.4 V19.2 L14.5 23.6 L5.6 19.2 V10.4 Z" fill="#ececec"/><path d="M5.6 10.4 L14.5 15 L23.4 10.4 M14.5 15 V23.6" fill="none" stroke="#434343" stroke-width="1.4"/></svg>
<div class="t" style="left:2956.7px;top:1921.2px;font-size:24.3px;color:#e6e6e6;font-weight:400;">Save Current View</div>
<div class="r" style="left:662px;top:1881px;width:705px;height:97px;border-radius:14px;background:#1f1f1f;box-shadow:0 0 14px rgba(40,40,40,0.6)"></div>
<svg class="r" style="left:692px;top:1899px;" width="59" height="59" viewBox="0 0 59 59"><defs><clipPath id="gc"><circle cx="29.5" cy="29.5" r="29.5"/></clipPath></defs><g clip-path="url(#gc)"><rect width="59" height="59" fill="#5a8848"/><path d="M0 10 Q20 0 40 20 L59 30 V0 H0Z" fill="#6a9650" opacity="0.6"/><path d="M10 59 L59 30 V36 L14 59 Z" fill="#c8c6b8"/><path d="M38 0 L59 10 V25 L45 22 Z" fill="#3f6a34" opacity="0.7"/></g></svg>
<div class="r" style="left:770px;top:1900px;width:233px;height:58px;border-radius:29px;background:#424242;overflow:hidden"><div class="r" style="left:155px;top:0;width:78px;height:58px;background:#31577d"></div></div>
<div class="r" style="left:846.5px;top:1900px;width:1.5px;height:58px;background:#2a2a2a;"></div>
<div class="r" style="left:924.5px;top:1900px;width:1.5px;height:58px;background:#2a2a2a;"></div>
<div class="t" style="left:773.8px;width:70px;text-align:center;top:1916.5px;font-size:27.7px;color:#e6e6e6;font-weight:700;">AT</div>
<div class="t" style="left:851.4px;width:70px;text-align:center;top:1915.9px;font-size:28.5px;color:#e6e6e6;font-weight:700;">2D</div>
<div class="t" style="left:929.8px;width:70px;text-align:center;top:1915.6px;font-size:28.8px;color:#e6e6e6;font-weight:700;">3D</div>
<div class="r" style="left:1024px;top:1900px;width:312px;height:58px;border-radius:29px;background:#404040"></div>
<div class="r" style="left:1100.8px;top:1900px;width:1.2000000000000455px;height:58px;background:#222;"></div>
<div class="r" style="left:1178.8px;top:1900px;width:1.2000000000000455px;height:58px;background:#222;"></div>
<div class="r" style="left:1256.8px;top:1900px;width:1.2000000000000455px;height:58px;background:#222;"></div>
<svg class="r" style="left:1045px;top:1916px;" width="36" height="28" viewBox="0 0 36 28"><path d="M1 8 Q1 6 3 6 H9 L12 2 H22 L25 6 H32 Q34 6 34 8 V25 Q34 27 32 27 H3 Q1 27 1 25 Z" fill="#e6e6e6"/><circle cx="17" cy="16" r="6.5" fill="none" stroke="#333" stroke-width="1.3"/><rect x="28.5" y="8.5" width="2" height="2" fill="#444"/></svg>
<svg class="r" style="left:1123px;top:1913px;" width="36" height="36" viewBox="0 0 36 36"><path d="M3 8 V4 Q3 3 4 3 H8 M28 3 H32 Q33 3 33 4 V8 M33 28 V32 Q33 33 32 33 H28 M8 33 H4 Q3 33 3 32 V28" fill="none" stroke="#e6e6e6" stroke-width="2.9" stroke-linecap="round"/><rect x="8.8" y="9.3" width="18" height="17.5" rx="2" fill="none" stroke="#e6e6e6" stroke-width="3"/></svg>
<svg class="r" style="left:1203px;top:1915px;" width="32" height="32" viewBox="0 0 32 32"><circle cx="12" cy="12" r="10" fill="none" stroke="#e6e6e6" stroke-width="3.3"/><path d="M19.5 19.5 L28.5 28.5" stroke="#e6e6e6" stroke-width="3.4" stroke-linecap="round"/><path d="M7.3 12 H16.7" stroke="#e6e6e6" stroke-width="3.3"/><path d="M12 7.3 V16.7" stroke="#e6e6e6" stroke-width="3.3"/></svg>
<svg class="r" style="left:1281px;top:1915px;" width="32" height="32" viewBox="0 0 32 32"><circle cx="12" cy="12" r="10" fill="none" stroke="#e6e6e6" stroke-width="3.3"/><path d="M19.5 19.5 L28.5 28.5" stroke="#e6e6e6" stroke-width="3.4" stroke-linecap="round"/><path d="M7.3 12 H16.7" stroke="#e6e6e6" stroke-width="3.3"/></svg>
</body></html>
